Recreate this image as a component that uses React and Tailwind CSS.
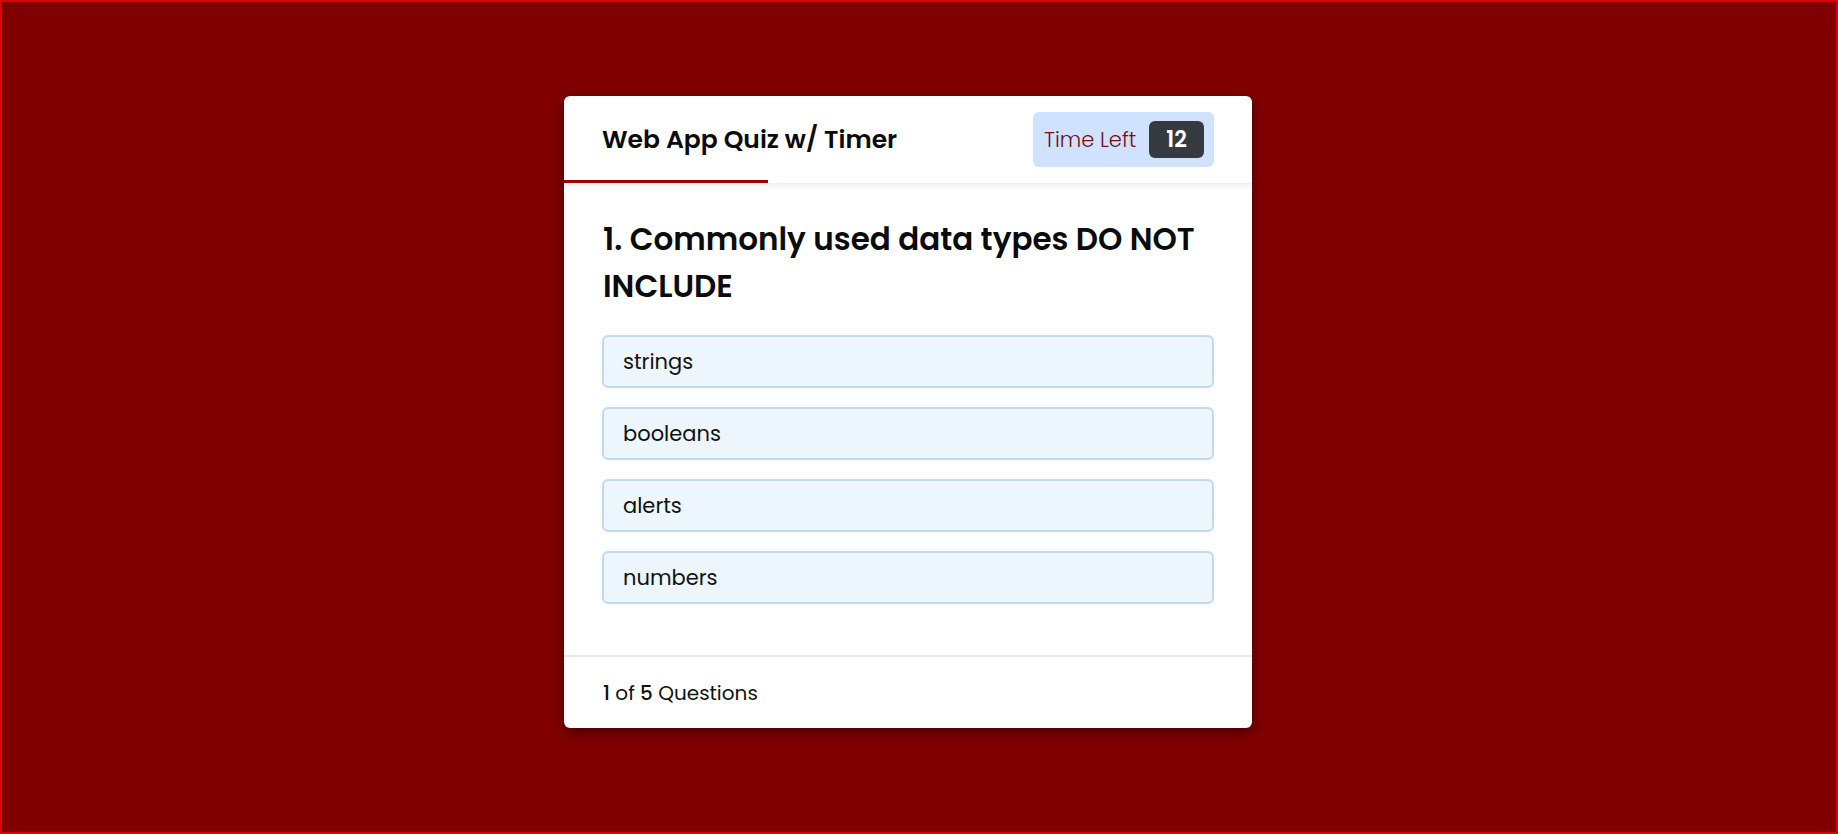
import React from 'react';

const options = ['strings', 'booleans', 'alerts', 'numbers'];

const App = () => {
  return (
    <div className="h-[834px] bg-[#800000] border-2 border-[#e00000] flex justify-center items-start pt-[94px] pr-[22px] font-['Poppins','Inter',sans-serif] text-[#0b0b0b]">
      <div className="w-[688px] bg-white rounded-md shadow-[0_4px_12px_rgba(0,0,0,0.45)] overflow-hidden">
        {/* header */}
        <div className="relative z-10 flex flex-col shadow-[0_3px_6px_rgba(0,0,0,0.08)]">
          <div className="h-[84px] flex items-center justify-between pl-[38px] pr-[38px] pt-[3px]">
            <h1 className="text-[25px] font-semibold">Web App Quiz w/ Timer</h1>
            <div className="h-[55px] w-[181px] bg-[#cfe2ff] rounded-md flex items-center justify-between pl-[11px] pr-[10px]">
              <span className="text-[21px] font-light text-[#7a0c14]">Time Left</span>
              <span className="h-[37px] w-[55px] bg-[#343a40] rounded-md flex items-center justify-center text-white text-[22px] font-semibold">
                12
              </span>
            </div>
          </div>
          <div className="h-[3px] w-[204px] bg-[#a00000]"></div>
        </div>

        {/* question */}
        <div className="pt-[33px] pl-[38px] pr-[38px] pb-[51px]">
          <h2 className="text-[31px] leading-[47px] font-semibold mb-[25px] pl-px">
            1. Commonly used data types DO NOT INCLUDE
          </h2>
          <div className="flex flex-col gap-[19px]">
            {options.map((opt) => (
              <button
                key={opt}
                className="h-[53px] w-full text-left px-[19px] bg-[#eef6fd] border-2 border-[#bfdaf4] rounded-md text-[21px] text-[#111]"
              >
                {opt}
              </button>
            ))}
          </div>
        </div>

        {/* footer */}
        <div className="h-[73px] border-t-2 border-[#e6e8ea] flex items-center px-[39px] text-[20px] text-[#111]">
          <span>
            <b className="font-medium">1</b> of <b className="font-medium">5</b> Questions
          </span>
        </div>
      </div>
    </div>
  );
};

export default App;
